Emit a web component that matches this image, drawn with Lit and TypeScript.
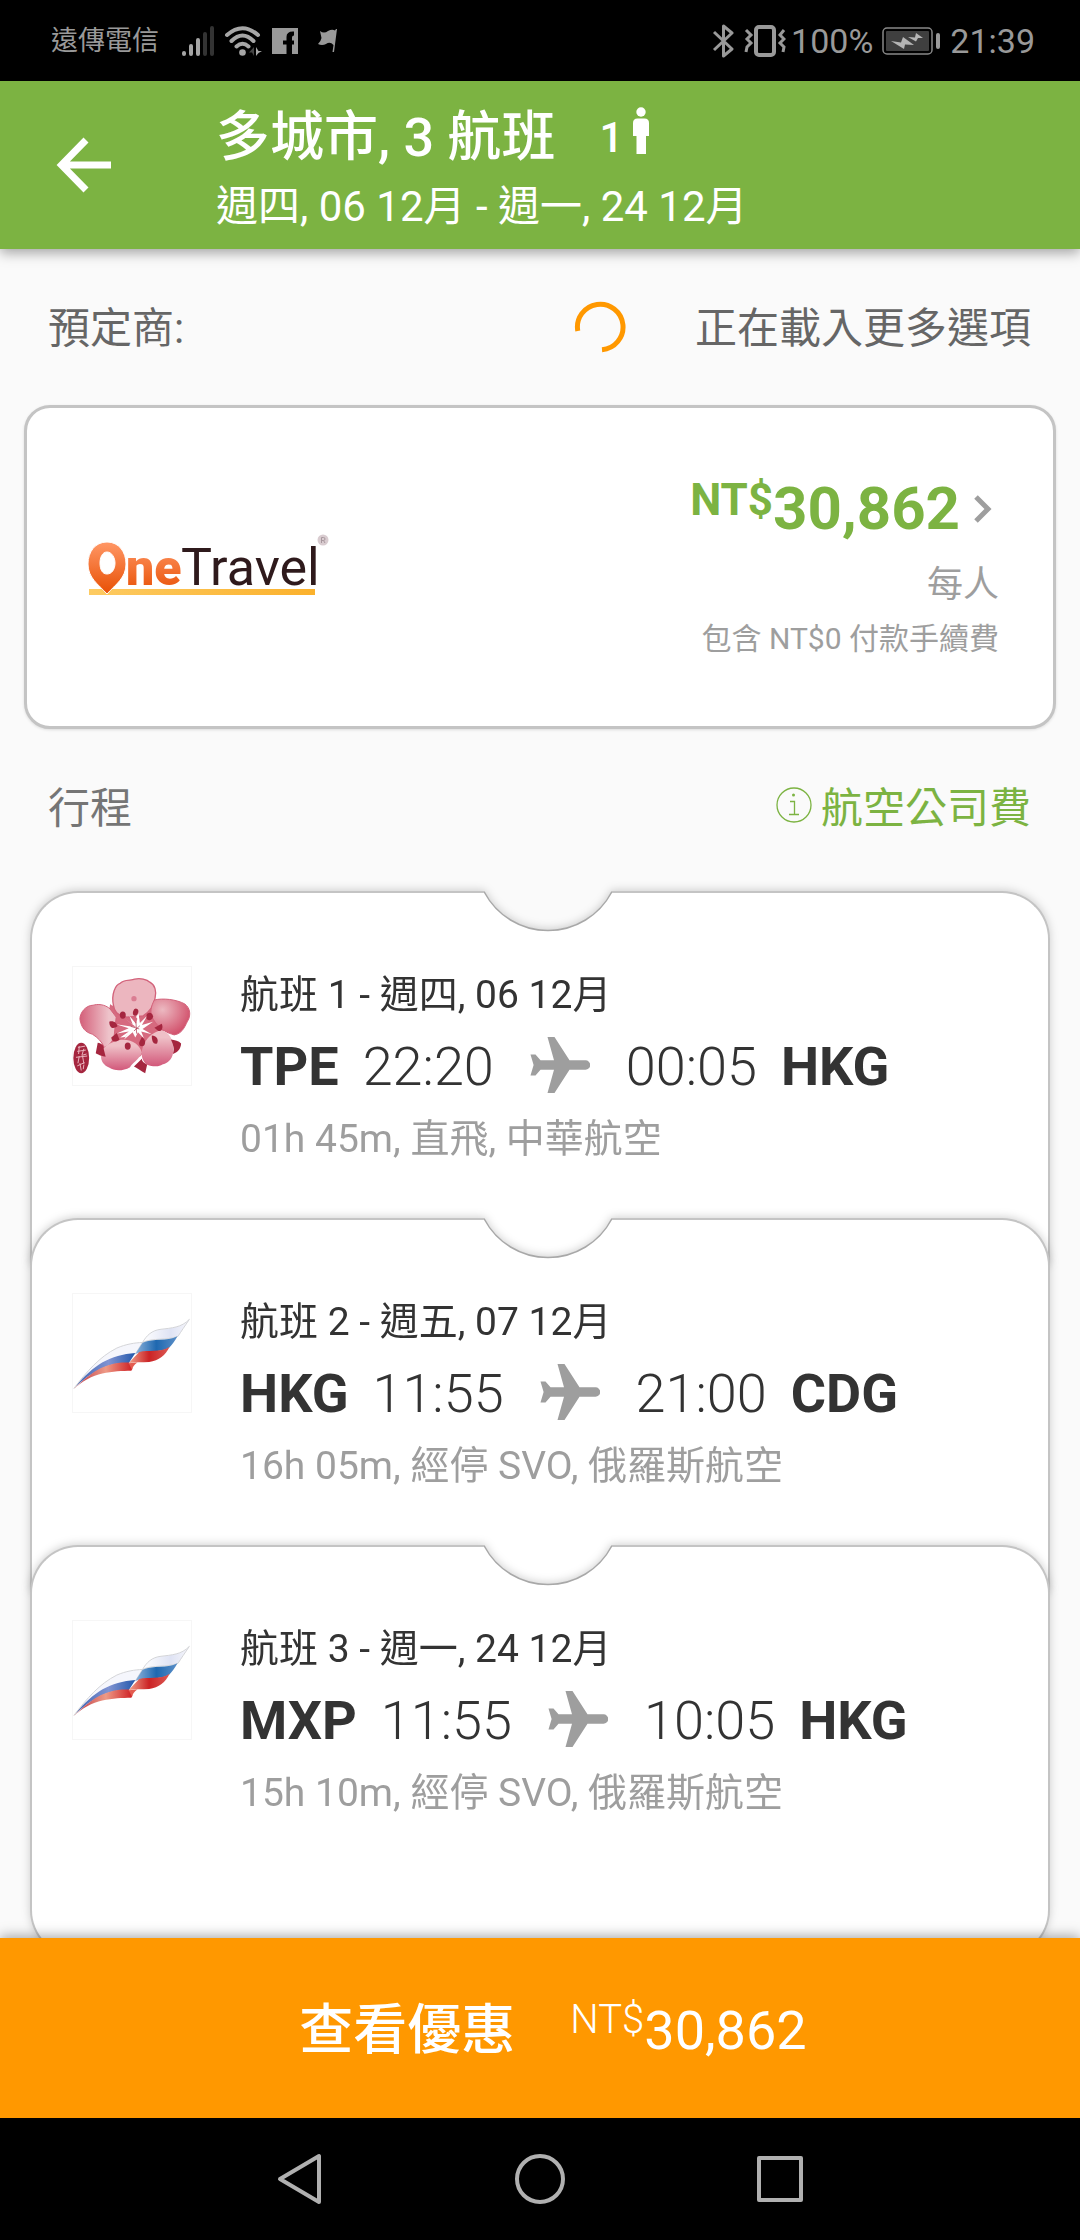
import { LitElement, html, css, svg } from "lit";
import { customElement, property } from "lit/decorators.js";

interface Flight {
  no: number;
  date: string;
  from: string;
  depart: string;
  arrive: string;
  to: string;
  detail: string;
  airline: "china" | "russia";
}

const FLIGHTS: Flight[] = [
  { no: 1, date: "週四, 06 12月", from: "TPE", depart: "22:20", arrive: "00:05", to: "HKG", detail: "01h 45m, 直飛, 中華航空", airline: "china" },
  { no: 2, date: "週五, 07 12月", from: "HKG", depart: "11:55", arrive: "21:00", to: "CDG", detail: "16h 05m, 經停 SVO, 俄羅斯航空", airline: "russia" },
  { no: 3, date: "週一, 24 12月", from: "MXP", depart: "11:55", arrive: "10:05", to: "HKG", detail: "15h 10m, 經停 SVO, 俄羅斯航空", airline: "russia" },
];

const chinaLogo = svg`
  <defs>
    <radialGradient id="petal-r" cx="0.3" cy="0.3" r="0.8"><stop offset="0" stop-color="#ecb9c1"/><stop offset="1" stop-color="#d04a66"/></radialGradient>
    <linearGradient id="petal-l" x1="0" x2="1"><stop offset="0" stop-color="#d4607a"/><stop offset="0.8" stop-color="#eec3ca"/></linearGradient>
    <linearGradient id="petal-b" x1="0" x2="0" y1="0" y2="1"><stop offset="0.2" stop-color="#efc0c7"/><stop offset="1" stop-color="#d2587a"/></linearGradient>
  </defs>
  <path fill="#d66a7f" d="M150 160 C158 175 265 190 285 148 L330 230 L290 260 L240 320 L150 290 L120 300 Z"/>
  <path fill="#ecb6bf" stroke="#d2627a" stroke-width="4" d="M160 165 C152 130 166 102 180 98 C190 84 214 90 224 85 C240 80 262 86 270 94 C286 102 291 122 286 142 C282 168 268 184 250 196 L200 200 C170 194 162 182 160 165 Z"/>
  <path fill="url(#petal-r)" stroke="#d2627a" stroke-width="3" d="M284 148 C310 142 350 146 376 160 C392 172 394 190 388 206 C378 222 372 250 344 254 C324 248 300 240 280 206 C268 188 274 166 284 148 Z"/>
  <path fill="url(#petal-l)" stroke="#d2627a" stroke-width="3" d="M150 176 C134 160 110 160 98 164 C76 164 58 186 58 206 C62 232 74 246 96 252 C112 262 124 274 132 292 C146 286 156 278 162 256 L168 200 Z"/>
  <path fill="url(#petal-b)" d="M122 318 C120 296 140 280 176 270 C214 264 240 284 246 308 C236 330 216 340 210 352 C186 366 160 362 148 354 C130 346 122 334 122 318 Z"/>
  <path fill="url(#petal-b)" d="M246 308 C248 270 280 244 306 240 C330 246 342 270 341 298 C342 322 330 338 308 344 C296 354 268 348 258 342 C248 332 244 320 246 308 Z"/>
  <g fill="#fff">
    <path d="M228 230 L196 206 L218 222 L208 196 L228 220 L236 192 L240 218 L262 196 L246 224 L280 214 L248 236 L276 252 L244 244 L252 264 L234 246 L226 262 L218 246 L192 268 L206 244 L170 250 L206 234 L168 222 L208 228 Z"/>
    <path d="M180 262 L212 240 L196 260 Z M228 200 l8 -10 2 20 z"/>
  </g>
  <path stroke="#a82c45" stroke-width="2" fill="none" d="M212 228 L238 236 M228 214 L230 250 M240 226 L222 242"/>
  <g fill="#a5263f">
    <ellipse cx="188" cy="194" rx="9" ry="11"/><ellipse cx="227" cy="185" rx="8" ry="11" transform="rotate(15 227 185)"/>
    <path d="M260 194 C264 184 278 184 280 198 C278 210 266 212 260 206 Z"/>
    <path d="M147 214 C160 210 170 218 172 228 C160 236 148 236 147 214 Z"/>
    <path d="M284 232 L306 220 C312 232 306 244 296 242 Z"/>
    <path d="M153 262 L170 248 L178 268 C168 278 154 276 153 262 Z"/>
    <ellipse cx="203" cy="288" rx="9" ry="11"/><path d="M246 260 C256 266 260 280 250 288 C240 290 236 284 238 276 Z"/>
    <path d="M276 256 C290 256 298 268 292 280 C282 284 276 276 276 256 Z"/>
    <path d="M112 278 C124 280 132 288 130 296 L136 320 C126 320 112 314 106 310 Z"/>
    <path d="M246 326 C246 336 256 340 262 344 L256 370 C244 364 230 354 222 350 Z"/>
    <path d="M334 268 C346 270 358 272 365 280 C364 298 354 306 340 312 C344 300 344 290 334 268 Z"/>
    <ellipse cx="62" cy="324" rx="24" ry="46"/>
  </g>
  <path stroke="#e9b4bd" stroke-width="3" fill="none" d="M52 292 L74 288 M50 304 L76 300 M56 288 L54 312 M70 296 L64 316 L78 312 M46 322 L80 318 M56 318 L52 340 M66 318 L70 342 M50 348 L72 338 M58 340 L62 362 M70 344 L68 358"/>
  <circle cx="222" cy="144" r="8" fill="#da7d92"/>`;

const russiaLogo = svg`
  <defs>
    <linearGradient id="blue-a" x1="0" x2="1"><stop offset="0" stop-color="#3d63b0"/><stop offset="0.55" stop-color="#8093d2"/><stop offset="1" stop-color="#2258ac"/></linearGradient>
    <linearGradient id="red-a" x1="0" x2="1"><stop offset="0" stop-color="#b93040"/><stop offset="0.55" stop-color="#ee9a86"/><stop offset="1" stop-color="#cf2024"/></linearGradient>
    <linearGradient id="blue-b" x1="0" x2="1"><stop offset="0" stop-color="#8db2da"/><stop offset="0.5" stop-color="#1f68b0"/><stop offset="1" stop-color="#5b8fc8"/></linearGradient>
    <linearGradient id="red-b" x1="0" x2="1"><stop offset="0" stop-color="#f0a08a"/><stop offset="0.5" stop-color="#cb2325"/><stop offset="1" stop-color="#dd5a54"/></linearGradient>
    <linearGradient id="white-b" x1="0" x2="1"><stop offset="0" stop-color="#ffffff"/><stop offset="0.6" stop-color="#dfe3f4"/><stop offset="1" stop-color="#f6f6fb"/></linearGradient>
  </defs>
  <g transform="translate(0 8)">
    <path fill="#f5f6fc" stroke="#d3d4d8" stroke-width="3" d="M40 326 C78 276 118 230 170 204 C198 192 224 188 248 187 L226 222 C160 226 100 262 40 326 Z"/>
    <path fill="url(#blue-a)" d="M46 320 C98 256 150 224 226 219 L206 250 C150 246 100 272 46 320 Z"/>
    <path fill="url(#red-a)" d="M38 330 C92 276 138 244 208 248 L206 250 C214 254 222 262 214 273 C160 274 92 276 38 330 Z"/>
    <path fill="url(#white-b)" stroke="#d3d4d8" stroke-width="3" d="M248 187 C260 166 276 150 304 147 C336 143 366 142 390 117 C376 138 366 152 356 168 C320 182 280 172 248 187 Z"/>
    <path fill="url(#blue-b)" d="M248 188 C284 172 318 186 354 168 C346 182 336 196 328 204 C300 220 262 208 226 222 Z"/>
    <path fill="url(#red-b)" d="M238 216 C266 208 300 220 330 200 C318 226 298 242 268 246 C246 248 228 246 206 249 Z"/>
    <path fill="#e35c50" d="M206 250 L232 248 C224 254 218 260 216 270 Z"/>
  </g>`;

@customElement("flight-ticket")
export class FlightTicket extends LitElement {
  @property({ attribute: false }) flight!: Flight;

  static styles = css`
    :host {
      display: block;
      filter: drop-shadow(0 -1px 4px rgba(0, 0, 0, 0.18));
    }
    .edge {
      display: grid;
      grid-template-columns: calc(50% - 56px) 128px 1fr;
      height: 48px;
    }
    .corner {
      box-sizing: border-box;
      background: #fff;
      border: 0 solid #c4c4c4;
      border-top-width: 2px;
    }
    .corner.left {
      border-left-width: 2px;
      border-top-left-radius: 48px;
    }
    .corner.right {
      border-right-width: 2px;
      border-top-right-radius: 48px;
    }
    .notch {
      display: block;
      width: 128px;
      height: 48px;
    }
    .body {
      display: grid;
      grid-template-columns: 120px 1fr;
      align-items: start;
      gap: 48px;
      padding: 27px 40px 104px;
      background: #fff;
      border: 0 solid #c4c4c4;
      border-width: 0 2px;
    }
    :host(.last) .body {
      padding-bottom: 140px;
      border-bottom-width: 2px;
      border-radius: 0 0 48px 48px;
    }
    .logo {
      box-sizing: border-box;
      width: 120px;
      height: 120px;
      border: 1px solid #f6f6f6;
    }
    .info {
      display: flex;
      flex-direction: column;
      gap: 17px;
      padding-top: 6px;
    }
    .title,
    .detail {
      margin: 0;
      font-size: 39px;
      font-weight: 400;
      line-height: 46px;
      color: #333;
    }
    .detail {
      color: #9e9e9e;
    }
    .route {
      display: flex;
      align-items: center;
      font-size: 54px;
      line-height: 64px;
      color: #333;
      gap: 24px;
    }
    .code {
      font-weight: 700;
    }
    .time {
      font-weight: 300;
    }
    .plane {
      width: 60px;
      height: 56px;
      margin: 0 12px 4px;
    }
  `;

  render() {
    const f = this.flight;
    return html`
      <div class="edge">
        <div class="corner left"></div>
        <svg class="notch" viewBox="0 0 128 48" aria-hidden="true">
          <path d="M0 0 A72 72 0 0 0 128 0 V48 H0 Z" fill="#fff" />
          <path d="M0 0.500 A72 72 0 0 0 128 0.500" fill="none" stroke="#a8a8a8" stroke-width="1.500" />
        </svg>
        <div class="corner right"></div>
      </div>
      <div class="body">
        <svg class="logo" viewBox="37 48 358 358" role="img" aria-label=${f.airline === "china" ? "中華航空" : "俄羅斯航空"}>
          ${f.airline === "china" ? chinaLogo : russiaLogo}
        </svg>
        <div class="info">
          <h3 class="title">航班 ${f.no} - ${f.date}</h3>
          <div class="route">
            <span class="code">${f.from}</span>
            <span class="time">${f.depart}</span>
            <svg class="plane" viewBox="0 0 60 56" fill="#9e9e9e" aria-hidden="true">
              <path d="M17.500 0 H24.500 L39.500 23.300 H55.500 A4.700 4.700 0 0 1 55.500 32.700 H39.500 L24.500 56 H17.500 L24 32.700 H10.500 L5.500 38.500 H0.500 L3.600 28 L0.500 17.500 H5.500 L10.500 23.300 H24 Z" />
            </svg>
            <span class="time">${f.arrive}</span>
            <span class="code">${f.to}</span>
          </div>
          <p class="detail">${f.detail}</p>
        </div>
      </div>
    `;
  }
}

@customElement("app-root")
export class AppRoot extends LitElement {
  static styles = css`
    :host {
      display: flex;
      flex-direction: column;
      height: 100vh;
      background: #fafafa;
      font-family: Roboto, "Noto Sans CJK TC", sans-serif;
    }
    button {
      font: inherit;
      border: 0;
      margin: 0;
      padding: 0;
      background: none;
      color: inherit;
      cursor: pointer;
    }
    a {
      color: inherit;
      text-decoration: none;
    }
    svg {
      display: block;
      flex: none;
    }
    .status {
      display: flex;
      align-items: center;
      flex: none;
      height: 81px;
      padding: 0 45px 0 51px;
      background: #000;
      color: #999;
      font-size: 34px;
      line-height: 40px;
    }
    .carrier {
      font-size: 27px;
      margin-right: 22px;
    }
    .status-icons {
      display: flex;
      gap: 9px;
      flex: 1;
    }
    .percent {
      margin: 0 9px 0 5px;
    }
    .clock {
      margin-left: 10px;
    }
    .header {
      display: flex;
      align-items: center;
      box-sizing: border-box;
      flex: none;
      height: 168px;
      padding: 0 48px;
      background: #7cb342;
      color: #fff;
      position: relative;
      box-shadow: 0 4px 12px rgba(0, 0, 0, 0.35);
      z-index: 1;
    }
    .back {
      padding: 8px;
      margin-right: 96px;
    }
    .heading {
      padding-top: 8px;
    }
    .headline {
      display: flex;
      align-items: center;
      margin: 0;
      font-size: 54px;
      font-weight: 500;
      line-height: 64px;
    }
    .pax {
      display: flex;
      align-items: center;
      gap: 10px;
      margin-left: 44px;
      font-size: 42px;
    }
    .pax svg {
      margin-bottom: 14px;
    }
    .dates {
      margin: 12px 0 0;
      font-size: 42px;
      line-height: 50px;
    }
    .content {
      flex: 1;
      min-height: 0;
      overflow-y: auto;
      scrollbar-width: none;
    }
    .section {
      display: flex;
      align-items: center;
      justify-content: space-between;
      height: 156px;
      padding: 0 49px 0 48px;
      color: #666;
      font-size: 42px;
      line-height: 50px;
    }
    .section h2 {
      margin: 0;
      font-size: 42px;
      font-weight: 400;
    }
    .section h2,
    .section span {
      padding-top: 4px;
    }
    .section.trip {
      color: #757575;
    }
    .loading {
      display: flex;
      align-items: center;
      gap: 69px;
    }
    .fees {
      display: flex;
      align-items: center;
      gap: 9px;
      color: #7cb342;
    }
    .fees svg {
      margin-bottom: 4px;
    }
    .offer {
      display: flex;
      align-items: center;
      justify-content: space-between;
      box-sizing: border-box;
      min-height: 324px;
      margin: 0 24px;
      padding: 0 54px 0 60px;
      background: #fff;
      border: 3px solid #c4c4c4;
      border-radius: 26px;
      box-shadow: 0 1px 3px rgba(0, 0, 0, 0.12);
    }
    .offer-info {
      display: flex;
      flex-direction: column;
      align-items: flex-end;
      color: #9e9e9e;
    }
    .price {
      display: flex;
      align-items: flex-start;
      color: #7cb342;
      font-size: 60px;
      font-weight: 700;
      line-height: 70px;
    }
    .price .currency {
      font-size: 44px;
      line-height: 52px;
    }
    .price svg {
      align-self: center;
      margin: 0 7px 0 14px;
    }
    .per {
      margin-top: 18px;
      font-size: 36px;
      line-height: 46px;
    }
    .fee-note {
      margin-top: 10px;
      font-size: 30px;
      line-height: 42px;
    }
    .tickets {
      display: block;
      margin: 0;
      padding: 6px 30px 48px;
      list-style: none;
    }
    .tickets li + li {
      margin-top: -48px;
    }
    .deal {
      display: flex;
      align-items: center;
      justify-content: center;
      gap: 55px;
      flex: none;
      height: 180px;
      padding: 6px 0 0 26px;
      background: #ff9800;
      color: #fff;
      font-size: 54px;
      line-height: 64px;
      position: relative;
      box-shadow: 0 -2px 12px rgba(0, 0, 0, 0.35);
      z-index: 1;
    }
    .deal-label {
      font-weight: 500;
    }
    .deal-price {
      display: flex;
      align-items: flex-start;
    }
    .deal-price .currency {
      font-size: 40px;
      font-weight: 300;
      line-height: 42px;
    }
    .nav {
      display: grid;
      grid-template-columns: repeat(3, 1fr);
      flex: none;
      height: 122px;
      padding: 0 calc(100% / 6);
      background: #000;
      position: relative;
      z-index: 1;
    }
    .nav button {
      display: grid;
      place-items: center;
    }
  `;

  private renderStatus() {
    return html`
      <div class="status">
        <span class="carrier">遠傳電信</span>
        <div class="status-icons">
          <svg width="34" height="32" viewBox="0 0 34 32" aria-hidden="true">
            <g stroke-width="4" stroke-linecap="round">
              <path stroke="#a6a6a6" d="M3 28 V29 M10 21 V29 M17 15 V29" />
              <path stroke="#333" d="M24 9 V29 M31 3 V29" />
            </g>
          </svg>
          <svg width="38" height="32" viewBox="0 0 38 32" fill="none" stroke="#a6a6a6" stroke-width="4" stroke-linecap="round" aria-hidden="true">
            <path d="M3 10 Q18.500 -3.500 34 10 M7.500 16 Q18.500 5 29.500 16 M12.500 21.500 Q18.500 16 24.500 21.500" />
            <circle cx="18.500" cy="27.500" r="3.300" fill="#a6a6a6" stroke="none" />
            <path fill="#a6a6a6" stroke="none" d="M32 22 V31 L34.500 28 L38 26 L34.500 26 Z" />
            <path fill="#444" stroke="none" d="M30 22 V31 L28 27.500 H25 Z" />
          </svg>
          <svg width="38" height="32" viewBox="-1 -3 38 32" aria-hidden="true">
            <path fill="#999" d="M0 0 H26 V26 H20 V16.500 H22 V12.500 H20 V9.500 Q20 7.500 22 7.500 V3.500 Q14.500 3 14.500 9 V12.500 H11 V16.500 H14.500 V26 H0 Z" />
          </svg>
          <svg width="20" height="32" viewBox="0 -3 20 32" aria-hidden="true">
            <path fill="#999" d="M2 3 Q6 6 10 3 Q14 1 17 2.500 L18 1 L19 1 L16 24 H14.500 L15.500 17 Q12 13 8 16 Q4 18 0 16 Q3 13 3.500 10 Z" />
          </svg>
        </div>
        <svg width="75" height="34" viewBox="0 0 75 34" fill="none" stroke="#999" aria-hidden="true">
          <path stroke-width="3" stroke-linejoin="round" d="M3 8 L21 25 L12.500 32 V2 L21 9 L3 26" />
          <rect x="45" y="3" width="18" height="28" rx="3" stroke-width="4" />
          <path stroke-width="3" d="M35 6 L40 11 L36 15 L40 19 L36 23 L35 28 M73 6 L69 11 L73 15 L69 19 L73 23 L72 28" />
        </svg>
        <span class="percent">100%</span>
        <svg width="58" height="28" viewBox="0 0 58 28" aria-hidden="true">
          <rect x="1" y="1" width="49" height="26" rx="4" fill="none" stroke="#888" stroke-width="1.500" />
          <rect x="4" y="4" width="43" height="20" rx="1" fill="#3f3f3f" />
          <path fill="#b5b5b5" d="M9 14 L19 15.500 L21 10 L32 18 L23 17.500 L22 22 Z M26 10 L33 10.500 L34 6 L41 11 L36 11 L34 14.500 Z" />
          <rect x="54" y="6" width="4" height="16" rx="2" fill="#999" />
        </svg>
        <span class="clock">21:39</span>
      </div>
    `;
  }

  render() {
    return html`
      ${this.renderStatus()}
      <header class="header">
        <button class="back" aria-label="返回">
          <svg width="56" height="56" viewBox="0 0 56 56" fill="none" stroke="#fff" stroke-width="7" aria-hidden="true">
            <path d="M55 28 H7 M30 3 L5.500 28 L30 53" />
          </svg>
        </button>
        <div class="heading">
          <h1 class="headline">
            多城市, 3 航班
            <span class="pax">
              1
              <svg width="16" height="48" viewBox="0 0 16 48" fill="#fff" aria-hidden="true">
                <circle cx="8" cy="5" r="4.700" />
                <path d="M4.500 11.500 H11.500 Q16 11.500 16 16 V29 H13 V47 H3.500 V29 H0 V16 Q0 11.500 4.500 11.500 Z" />
              </svg>
            </span>
          </h1>
          <p class="dates">週四, 06 12月 - 週一, 24 12月</p>
        </div>
      </header>
      <main class="content">
        <div class="section">
          <h2>預定商:</h2>
          <div class="loading" role="status">
            <svg width="52" height="52" viewBox="0 0 52 52" fill="none" stroke="#ff9800" stroke-width="5" aria-hidden="true">
              <path d="M3.800 30 A22.800 22.800 0 1 1 28 48.700" />
            </svg>
            <span>正在載入更多選項</span>
          </div>
        </div>
        <a class="offer" href="#offer">
          <svg width="246" height="68" viewBox="0 0 246 68" role="img" aria-label="OneTravel">
            <defs>
              <linearGradient id="flame" gradientUnits="userSpaceOnUse" x1="0" x2="0" y1="10" y2="56">
                <stop offset="0" stop-color="#ff9664" />
                <stop offset="1" stop-color="#ea560d" />
              </linearGradient>
              <linearGradient id="gold" x1="0" x2="1">
                <stop offset="0" stop-color="#fdcb62" />
                <stop offset="1" stop-color="#fbb12c" />
              </linearGradient>
            </defs>
            <rect x="2" y="56" width="226" height="6" fill="url(#gold)" />
            <path fill="url(#flame)" stroke="#fff" stroke-width="1" fill-rule="evenodd" d="M20 9 C32 9 39 19 39 31 C39 45 29 51 20 61 C11 51 1 45 1 31 C1 19 8 9 20 9 Z M20 19 C15 19 13 25 13 30 C13 36 15 41 20 41 C25 41 28 36 28 30 C28 25 25 19 20 19 Z" />
            <text x="39" y="52" font-family="Roboto" font-weight="900" font-size="50" fill="url(#flame)">ne</text>
            <text x="94" y="52" font-family="Roboto" font-weight="400" font-size="52" fill="#2f1a1c">Travel</text>
            <circle cx="236" cy="7" r="5.500" fill="#d9ccd0" />
            <path d="M234.500 10 V4.500 H236.500 A1.500 1.500 0 0 1 236.500 7.500 H234.500 M236.500 7.500 L238 10" fill="none" stroke="#a8989e" stroke-width="1" />
          </svg>
          <div class="offer-info">
            <div class="price">
              <span class="currency">NT$</span><span>30,862</span>
              <svg width="18" height="28" viewBox="0 0 18 28" fill="none" stroke="#9e9e9e" stroke-width="5" aria-hidden="true">
                <path d="M2 2 L14 14 L2 26" />
              </svg>
            </div>
            <div class="per">每人</div>
            <div class="fee-note">包含 NT$0 付款手續費</div>
          </div>
        </a>
        <div class="section trip">
          <h2>行程</h2>
          <a class="fees" href="#fees">
            <svg width="36" height="36" viewBox="0 0 36 36" fill="none" stroke="#7cb342" stroke-width="1.300" aria-hidden="true">
              <circle cx="18" cy="18" r="17" />
              <path d="M14 14.500 H18.500 V27 M13 27.500 H23" />
              <circle cx="17.500" cy="8" r="1.500" fill="#7cb342" stroke="none" />
            </svg>
            <span>航空公司費</span>
          </a>
        </div>
        <ul class="tickets">
          ${FLIGHTS.map(
            (f, i) => html`<li><flight-ticket class=${i === FLIGHTS.length - 1 ? "last" : ""} .flight=${f}></flight-ticket></li>`
          )}
        </ul>
      </main>
      <button class="deal">
        <span class="deal-label">查看優惠</span>
        <span class="deal-price"><span class="currency">NT$</span><span>30,862</span></span>
      </button>
      <nav class="nav">
        <button aria-label="返回">
          <svg width="52" height="52" viewBox="0 0 52 52" fill="none" stroke="#b0b0b0" stroke-width="4" stroke-linejoin="round" aria-hidden="true">
            <path d="M45 3 V49 L6 26 Z" />
          </svg>
        </button>
        <button aria-label="主畫面">
          <svg width="52" height="52" viewBox="0 0 52 52" fill="none" stroke="#b0b0b0" stroke-width="4" aria-hidden="true">
            <circle cx="26" cy="26" r="23" />
          </svg>
        </button>
        <button aria-label="最近使用">
          <svg width="52" height="52" viewBox="0 0 52 52" fill="none" stroke="#b0b0b0" stroke-width="4" stroke-linejoin="round" aria-hidden="true">
            <rect x="5" y="5" width="42" height="42" />
          </svg>
        </button>
      </nav>
    `;
  }
}
